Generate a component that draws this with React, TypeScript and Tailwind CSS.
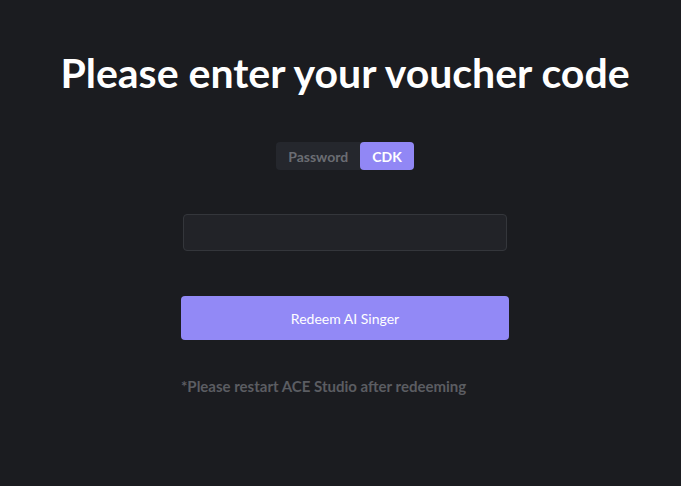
export default function App() {
  return (
    <div className="min-h-screen w-full bg-[#1b1c20] font-['Lato',sans-serif]">
      <div className="flex flex-col items-center pl-[9px] pt-[49px]">
        {/* title */}
        <h1 className="text-[41px] font-bold leading-[48px] text-white">
          Please enter your voucher code
        </h1>

        {/* tabs */}
        <div className="mt-[45px] flex h-[28px] rounded-[4px] bg-[#25272d] text-[14px] font-bold">
          <button className="px-[12px] text-[#6b6d73]">Password</button>
          <button className="rounded-[4px] bg-[#9187f5] px-[12px] text-white">
            CDK
          </button>
        </div>

        {/* code input */}
        <input
          type="text"
          className="mt-[44px] h-[37px] w-[324px] rounded-[4px] border border-[#34363b] bg-[#222328] px-3 text-sm text-white outline-none"
        />

        <div className="mt-[45px] flex w-[328px] flex-col">
          <button className="h-[44px] w-full rounded-[4px] bg-[#9289f6] text-[14px] font-normal text-white">
            Redeem AI Singer
          </button>
          <p className="mt-[35px] text-[15px] font-bold text-[#5b5d62]">
            *Please restart ACE Studio after redeeming
          </p>
        </div>
      </div>
    </div>
  );
}
